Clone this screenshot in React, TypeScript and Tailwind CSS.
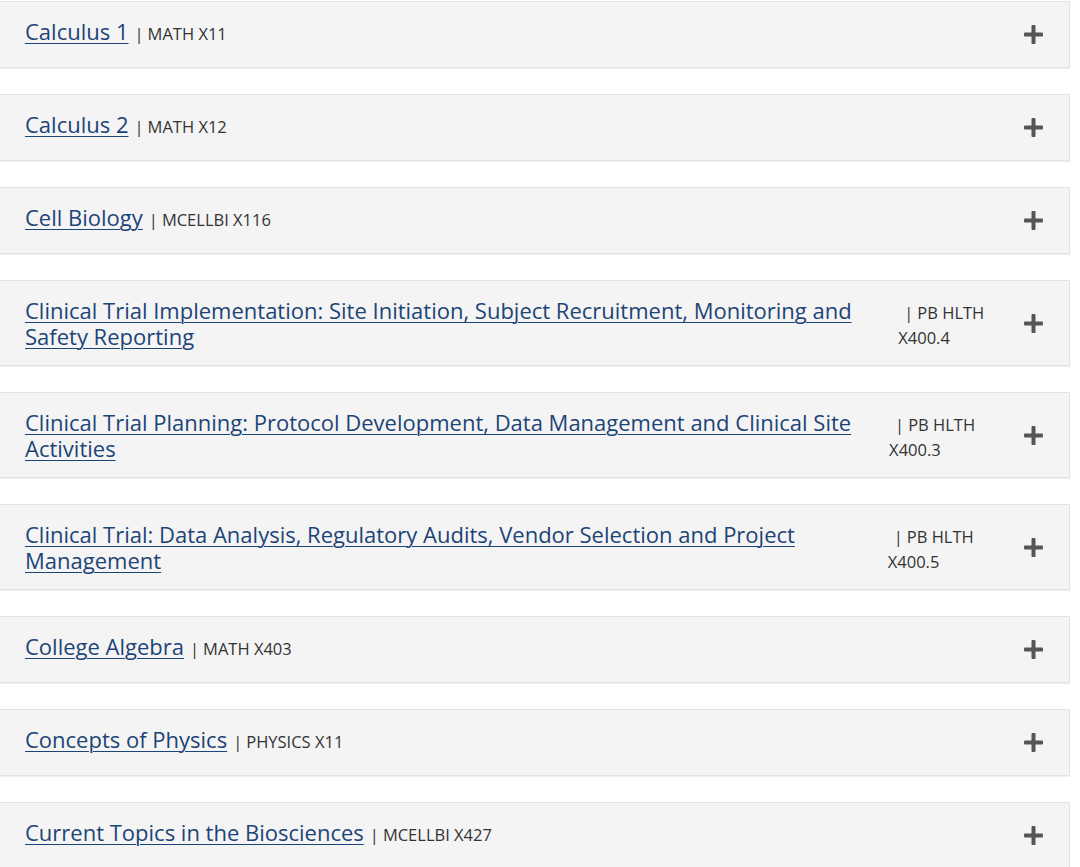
import React from "react";

type Course = { title: string; code: string };

const courses: Course[] = [
  { title: "Calculus 1", code: "MATH X11" },
  { title: "Calculus 2", code: "MATH X12" },
  { title: "Cell Biology", code: "MCELLBI X116" },
  {
    title:
      "Clinical Trial Implementation: Site Initiation, Subject Recruitment, Monitoring and Safety Reporting",
    code: "PB HLTH X400.4",
  },
  {
    title:
      "Clinical Trial Planning: Protocol Development, Data Management and Clinical Site Activities",
    code: "PB HLTH X400.3",
  },
  {
    title:
      "Clinical Trial: Data Analysis, Regulatory Audits, Vendor Selection and Project Management",
    code: "PB HLTH X400.5",
  },
  { title: "College Algebra", code: "MATH X403" },
  { title: "Concepts of Physics", code: "PHYSICS X11" },
  { title: "Current Topics in the Biosciences", code: "MCELLBI X427" },
];

function PlusIcon() {
  return (
    <svg width="19" height="19" viewBox="0 0 19 19" aria-hidden="true">
      <rect x="7.5" y="0" width="4" height="19" rx="1" fill="#555555" />
      <rect x="0" y="7.5" width="19" height="4" rx="1" fill="#555555" />
    </svg>
  );
}

function Row({ course }: { course: Course }) {
  return (
    <div className="flex items-center bg-[#f4f4f4] border-y border-r border-[#e3e3e3] shadow-[0_1px_1px_rgba(0,0,0,0.06)] pl-[25px] py-4">
      <div className="flex flex-1 items-baseline self-start min-w-0">
        <a
          href="#"
          className="text-[22px] leading-[26px] text-[#1d4477] underline decoration-1 underline-offset-[3px]"
        >
          {course.title}
        </a>
        <span className="text-[16.5px] leading-[25px] text-[#333333] -mb-[3px]">
          <span className="ml-[6px] mr-[4px]">|</span>
          {course.code}
        </span>
      </div>
      <div className="w-[47px] h-[33px] flex items-center justify-start pl-[2px] shrink-0">
        <PlusIcon />
      </div>
    </div>
  );
}

export default function App() {
  return (
    <div
      className="w-[1070px] pt-px flex flex-col gap-[26px] bg-white"
      style={{ fontFamily: '"Open Sans", "Noto Sans", sans-serif' }}
    >
      {courses.map((c) => (
        <Row key={c.title} course={c} />
      ))}
    </div>
  );
}
